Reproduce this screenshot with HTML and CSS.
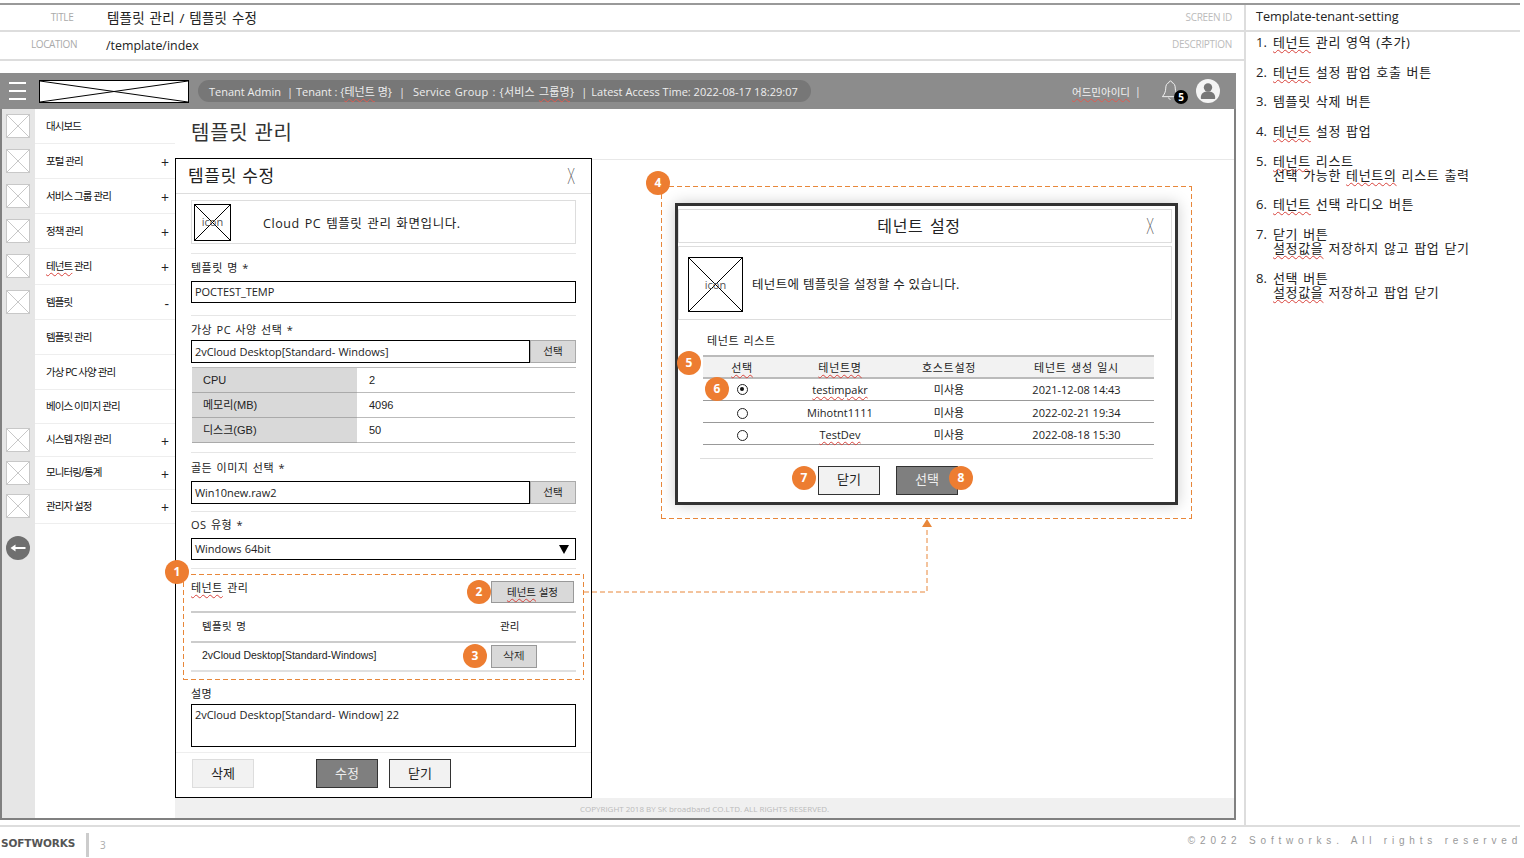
FILE: index.html
```html
<!DOCTYPE html>
<html lang="ko">
<head>
<meta charset="utf-8">
<title>Template-tenant-setting</title>
<link rel="stylesheet" href="styles.css">
</head>
<body>
<div class="page">
  <div class="top">
    <div class="left">
      <div class="meta">
        <div class="meta-row row-a">
          <span class="meta-key key-title">TITLE</span>
          <span class="meta-val">템플릿 관리 / 템플릿 수정</span>
          <span class="meta-side">SCREEN ID</span>
        </div>
        <div class="meta-row row-b">
          <span class="meta-key key-loc">LOCATION</span>
          <span class="meta-val val-loc">/template/index</span>
          <span class="meta-side">DESCRIPTION</span>
        </div>
      </div>
      <div class="app">
        <header class="bar">
          <div class="burger"><i></i><i></i><i></i></div>
          <svg class="logo xbox" viewBox="0 0 10 10" preserveAspectRatio="none"><path d="M0 0L10 10M10 0L0 10"/></svg>
          <div class="pill">
            <span>Tenant Admin</span><span class="p1">| Tenant : {<span class="sq sq-w">테넌트</span> 명}</span><span class="p2">|</span><span class="p3">Service Group : {서비스 <span class="sq sq-w">그룹명</span>}</span><span class="p2">|</span><span class="p4">Latest Access Time: 2022-08-17 18:29:07</span>
          </div>
          <div class="user"><span class="sq sq-w">어드민아이디</span><span class="user-sep">|</span></div>
          <svg class="bell" viewBox="0 0 20 24"><path d="M10 2.500c-.9 0-1.500.7-1.500 1.500C6 5 5 7.200 5 10c0 4-1.500 6.500-3.500 9h12c.8 0 5 0 5-1-2-2-3.500-4-3.500-8 0-2.800-1-5-3.500-6 0-.8-.6-1.500-1.500-1.500z"/><path d="M8 20c.3 1.200 1 2 2 2"/></svg>
          <svg class="avatar" viewBox="0 0 24 24"><circle cx="12" cy="12" r="12" fill="#f4f4f4"/><circle cx="12" cy="8.500" r="4.200" fill="#777"/><path d="M4.800 19c0-5 3-6.500 7.200-6.500s7.200 1.500 7.200 6.500c0 .6-.4 1-1 1H5.800c-.6 0-1-.4-1-1z" fill="#777"/></svg>
        </header>
        <div class="body">
          <nav class="side">
            <div class="item"><div class="ico"><svg class="xbox lite" viewBox="0 0 10 10" preserveAspectRatio="none"><path d="M0 0L10 10M10 0L0 10"/></svg></div><div class="lbl"><span>대시보드</span></div></div>
            <div class="item"><div class="ico"><svg class="xbox lite" viewBox="0 0 10 10" preserveAspectRatio="none"><path d="M0 0L10 10M10 0L0 10"/></svg></div><div class="lbl"><span>포털 관리</span><b>+</b></div></div>
            <div class="item"><div class="ico"><svg class="xbox lite" viewBox="0 0 10 10" preserveAspectRatio="none"><path d="M0 0L10 10M10 0L0 10"/></svg></div><div class="lbl"><span>서비스 그룹 관리</span><b>+</b></div></div>
            <div class="item"><div class="ico"><svg class="xbox lite" viewBox="0 0 10 10" preserveAspectRatio="none"><path d="M0 0L10 10M10 0L0 10"/></svg></div><div class="lbl"><span>정책 관리</span><b>+</b></div></div>
            <div class="item tall"><div class="ico"><svg class="xbox lite" viewBox="0 0 10 10" preserveAspectRatio="none"><path d="M0 0L10 10M10 0L0 10"/></svg></div><div class="lbl"><span><span class="sq">테넌트</span> 관리</span><b>+</b></div></div>
            <div class="item"><div class="ico"><svg class="xbox lite" viewBox="0 0 10 10" preserveAspectRatio="none"><path d="M0 0L10 10M10 0L0 10"/></svg></div><div class="lbl"><span>템플릿</span><b>-</b></div></div>
            <div class="item"><div class="ico"></div><div class="lbl"><span>템플릿 관리</span></div></div>
            <div class="item"><div class="ico"></div><div class="lbl"><span>가상 PC 사양 관리</span></div></div>
            <div class="item mid"><div class="ico"></div><div class="lbl"><span>베이스 이미지 관리</span></div></div>
            <div class="item low"><div class="ico"><svg class="xbox lite" viewBox="0 0 10 10" preserveAspectRatio="none"><path d="M0 0L10 10M10 0L0 10"/></svg></div><div class="lbl"><span>시스템 자원 관리</span><b>+</b></div></div>
            <div class="item low"><div class="ico"><svg class="xbox lite" viewBox="0 0 10 10" preserveAspectRatio="none"><path d="M0 0L10 10M10 0L0 10"/></svg></div><div class="lbl"><span>모니터링/통계</span><b>+</b></div></div>
            <div class="item mid"><div class="ico"><svg class="xbox lite" viewBox="0 0 10 10" preserveAspectRatio="none"><path d="M0 0L10 10M10 0L0 10"/></svg></div><div class="lbl"><span>관리자 설정</span><b>+</b></div></div>
            <svg class="back" viewBox="0 0 24 24"><circle cx="12" cy="12" r="12" fill="#6f6f6f"/><path d="M4.500 12l5-3.500V11h10v2h-10v2.500z" fill="#fff"/></svg>
          </nav>
          <main class="main">
            <h1 class="page-title">템플릿 관리</h1>
            <div class="fill"></div>
            <div class="copy">COPYRIGHT 2018 BY SK broadband CO.LTD. ALL RIGHTS RESERVED.</div>
          </main>
        </div>
      </div>
    </div>
    <aside class="notes">
      <div class="notes-id">Template-tenant-setting</div>
      <ol class="note-list">
        <li><span class="sq">테넌트</span> 관리 영역 (추가)</li>
        <li><span class="sq">테넌트</span> 설정 팝업 호출 버튼</li>
        <li>템플릿 삭제 버튼</li>
        <li><span class="sq">테넌트</span> 설정 팝업</li>
        <li><span class="sq">테넌트</span> 리스트<br>선택 가능한 <span class="sq">테넌트의</span> 리스트 출력</li>
        <li><span class="sq">테넌트</span> 선택 라디오 버튼</li>
        <li>닫기 버튼<br><span class="sq">설정값을</span> 저장하지 않고 팝업 닫기</li>
        <li>선택 버튼<br><span class="sq">설정값을</span> 저장하고 팝업 닫기</li>
      </ol>
    </aside>
  </div>
  <footer class="foot">
    <span class="brand">SOFTWORKS</span>
    <span class="foot-bar"></span>
    <span class="pageno">3</span>
    <span class="rights">©2022 Softworks. All rights reserved</span>
  </footer>

  <section class="modal">
    <div class="m-head"><span class="m-title">템플릿 수정</span><span class="closex">X</span></div>
    <div class="m-body">
      <div class="m-info">
        <div class="icon-box m-ic"><svg class="xbox dark" viewBox="0 0 10 10" preserveAspectRatio="none"><path d="M0 0L10 10M10 0L0 10"/></svg><span>icon</span></div>
        <p>Cloud PC 템플릿 관리 화면입니다.</p>
      </div>
      <div class="rule r1"></div>
      <div class="sec s-a">
        <label class="f-l l27">템플릿 명 *</label>
        <div class="inp h22">POCTEST_TEMP</div>
      </div>
      <div class="sec s-b">
        <label class="f-l l24">가상 PC 사양 선택 *</label>
        <div class="pick"><div class="inp">2vCloud Desktop[Standard- Windows]</div><button class="pick-btn">선택</button></div>
        <div class="spec">
          <div class="sp-k">CPU</div><div class="sp-v">2</div>
          <div class="sp-k">메모리(MB)</div><div class="sp-v">4096</div>
          <div class="sp-k">디스크(GB)</div><div class="sp-v">50</div>
        </div>
      </div>
      <div class="sec s-c">
        <label class="f-l l28">골든 이미지 선택 *</label>
        <div class="pick"><div class="inp">Win10new.raw2</div><button class="pick-btn">선택</button></div>
      </div>
      <div class="sec s-d">
        <label class="f-l l26">OS 유형 *</label>
        <div class="inp h22 sel"><span>Windows 64bit</span><svg class="caret" viewBox="0 0 10 9"><path d="M0 0h10L5 9z"/></svg></div>
      </div>
      <div class="tm dashed">
        <div class="tm-top"><span class="tm-title"><span class="sq">테넌트</span> 관리</span><button class="gbtn b-set"><span class="sq">테넌트</span> 설정</button></div>
        <div class="tm-row tm-h"><span>템플릿 명</span><span class="tm-c2">관리</span></div>
        <div class="tm-row tm-d"><span>2vCloud Desktop[Standard-Windows]</span><button class="gbtn b-del">삭제</button></div>
      </div>
      <label class="f-l desc-l">설명</label>
      <div class="inp area">2vCloud Desktop[Standard- Window] 22</div>
    </div>
    <div class="m-foot">
      <button class="fbtn lite-b">삭제</button>
      <button class="fbtn dark-b m-save">수정</button>
      <button class="fbtn line-b">닫기</button>
    </div>
  </section>

  <section class="pop-area dashed">
    <div class="pop">
      <div class="p-head"><span>테넌트 설정</span><span class="closex cx2">X</span></div>
      <div class="p-info">
        <div class="icon-box p-ic"><svg class="xbox dark" viewBox="0 0 10 10" preserveAspectRatio="none"><path d="M0 0L10 10M10 0L0 10"/></svg><span>icon</span></div>
        <p>테넌트에 템플릿을 설정할 수 있습니다.</p>
      </div>
      <div class="p-label">테넌트 리스트</div>
      <table class="p-table">
        <colgroup><col class="c1"><col class="c2"><col class="c3"><col class="c4"></colgroup>
        <thead><tr><th><span class="sq">선택</span></th><th><span class="sq">테넌트명</span></th><th>호스트설정</th><th>테넌트 생성 일시</th></tr></thead>
        <tbody>
          <tr><td><i class="radio on"></i></td><td><span class="sq">testimpakr</span></td><td>미사용</td><td>2021-12-08 14:43</td></tr>
          <tr><td><i class="radio"></i></td><td>Mihotnt1111</td><td>미사용</td><td>2022-02-21 19:34</td></tr>
          <tr><td><i class="radio"></i></td><td><span class="sq">TestDev</span></td><td>미사용</td><td>2022-08-18 15:30</td></tr>
        </tbody>
      </table>
      <div class="p-rule"></div>
      <div class="p-foot">
        <button class="fbtn line-b">닫기</button>
        <button class="fbtn dark-b">선택</button>
      </div>
    </div>
  </section>

  <svg class="link" viewBox="0 0 350 80"><path class="link-l" d="M0 73H343V7"/><path class="link-t" d="M343 0l5 8h-10z"/></svg>

  <span class="bell-n">5</span>
  <span class="num n1">1</span><span class="num n2">2</span><span class="num n3">3</span><span class="num n4">4</span>
  <span class="num n5">5</span><span class="num n6">6</span><span class="num n7">7</span><span class="num n8">8</span>
</div>
</body>
</html>
```
FILE: styles.css
```css
* { box-sizing: border-box; }
html, body { margin: 0; padding: 0; background: #fff; }
body { font-family: "Open Sans", "Noto Sans CJK KR", sans-serif; color: #222; font-size: 12px; }
button { font: inherit; margin: 0; padding: 0; cursor: default; }
p, h1, ol, label { margin: 0; padding: 0; }
.page { position: relative; width: 1524px; height: 858px; overflow: hidden; padding-top: 3px; }
.sq { text-decoration: underline wavy #d8433c 1px; text-underline-offset: 2px; }
.sq-w { text-decoration-color: #e05a50; }
.dashed {
  background:
    repeating-linear-gradient(90deg, #e8873a 0 5px, transparent 5px 8px) left top / 100% 1px no-repeat,
    repeating-linear-gradient(90deg, #e8873a 0 5px, transparent 5px 8px) left bottom / 100% 1px no-repeat,
    repeating-linear-gradient(180deg, #e8873a 0 5px, transparent 5px 8px) left top / 1px 100% no-repeat,
    repeating-linear-gradient(180deg, #e8873a 0 5px, transparent 5px 8px) right top / 1px 100% no-repeat;
}

.top { display: grid; grid-template-columns: 1244px 276px; width: 1520px; height: 824px; border-top: 2px solid #999; border-bottom: 2px solid #ddd; }
.left { display: flex; flex-direction: column; }

.meta { height: 56px; }
.meta-row { display: flex; align-items: center; border-bottom: 2px solid #ddd; }
.row-a { height: 27px; }
.row-b { height: 29px; }
.meta-key { color: #aaa; font-size: 10px; letter-spacing: -.4px; text-align: center; width: 107px; }
.key-title { width: 124px; margin-top: -2px; }
.key-loc { width: 108px; margin-top: -3px; }
.meta-val { font-size: 13.500px; color: #222; flex: 1; word-spacing: 1px; letter-spacing: .2px; }
.row-a .meta-val { margin-left: -17px; margin-top: -1px; }
.val-loc { letter-spacing: 0; word-spacing: 0; margin-left: -2px; font-size: 12.400px; }
.meta-side { color: #bbb; font-size: 10px; letter-spacing: -.3px; text-align: right; width: 150px; padding-right: 12px; margin-top: -2px; }
.row-b .meta-side { margin-top: -4px; }

.app { margin-top: 12px; width: 1236px; height: 747px; border: 2px solid #808080; border-top: 0; display: flex; flex-direction: column; }
.bar { height: 36px; flex: none; background: #8c8c8c; display: flex; align-items: center; margin: 0 -2px; padding-left: 9px; }
.burger { width: 17px; height: 18px; display: flex; flex-direction: column; justify-content: space-between; }
.burger i { display: block; height: 2px; background: #fff; }
.xbox { display: block; fill: none; background: #fff; }
.xbox path { stroke: #000; stroke-width: 1px; vector-effect: non-scaling-stroke; }
.logo { width: 150px; height: 23px; margin-left: 13px; border: 1px solid #000; }
.pill { width: 613px; height: 22px; margin-left: 9px; background: #777; border-radius: 11px; color: #eee; display: flex; align-items: center; padding-left: 11px; font-size: 11px; white-space: nowrap; }
.p1 { margin-left: 6px; }
.p2 { margin-left: 7px; }
.p3 { margin-left: 8px; letter-spacing: .2px; word-spacing: 1px; }
.p4 { margin-left: 4px; letter-spacing: .02px; }
.user { margin-left: 261px; width: 72px; color: #f2f2f2; font-size: 10.500px; display: flex; white-space: nowrap; }
.user-sep { margin-left: 5px; }
.bell { width: 19px; height: 24px; margin-left: 17px; fill: none; stroke: #f4f4f4; stroke-width: 1; margin-top: -3px; }
.avatar { width: 24px; height: 24px; margin-left: 16px; }
.bell-n { position: absolute; left: 1174px; top: 90px; width: 14px; height: 14px; border-radius: 50%; background: #000; color: #fff; font-size: 10px; font-weight: 700; line-height: 14px; text-align: center; }

.body { flex: 1; display: flex; min-height: 0; }
.side { width: 173px; flex: none; background: linear-gradient(90deg, #e6e6e6 33px, #fff 33px); }
.item { display: flex; height: 35px; }
.item.tall { height: 36px; }
.item.mid { height: 34px; }
.item.low { height: 33px; }
.ico { width: 33px; flex: none; display: flex; align-items: center; padding-left: 4px; padding-bottom: 2px; }
.xbox.lite { width: 24px; height: 24px; border: 1px solid #c8c8c8; }
.xbox.lite path { stroke: #c8c8c8; }
.lbl { flex: 1; display: flex; align-items: center; justify-content: space-between; padding: 0 7px 0 11px; border-bottom: 1px solid #eee; font-size: 10.500px; letter-spacing: -.9px; color: #111; white-space: nowrap; }
.lbl > span { margin-top: -2px; }
.mid .lbl > span { margin-top: -3px; }
.low .lbl > span { margin-top: -4px; }
.lbl b { font-weight: 400; font-size: 14px; color: #222; margin-top: 2px; }
.back { display: block; width: 24px; height: 24px; margin: 12px 0 0 4px; }

.main { flex: 1; display: flex; flex-direction: column; }
.page-title { height: 51px; border-bottom: 1px solid #e8e8e8; font-size: 20px; font-weight: 400; line-height: 47px; padding-left: 16px; letter-spacing: .75px; color: #333; }
.fill { flex: 1; }
.copy { height: 20px; background: #f0f0f0; color: #bbb; font-size: 8px; line-height: 22px; padding-left: 405px; letter-spacing: -.02px; }

.notes { border-left: 2px solid #ddd; }
.notes-id { height: 27px; border-bottom: 2px solid #ddd; padding-left: 10px; font-size: 12.700px; line-height: 23px; }
.note-list { list-style: none; counter-reset: n; padding: 3px 0 0 10px; display: flex; flex-direction: column; gap: 15.700px; margin: 0; }
.note-list li { counter-increment: n; position: relative; padding-left: 17px; font-size: 13px; line-height: 14px; letter-spacing: .65px; word-spacing: 1px; white-space: nowrap; }
.note-list li::before { content: counter(n) "."; position: absolute; left: 0; top: 0; letter-spacing: 0; }

.foot { display: flex; height: 30px; align-items: center; position: relative; padding-left: 1px; }
.brand { font-family: "DejaVu Sans", sans-serif; font-weight: 700; font-size: 10.500px; color: #555; width: 85px; letter-spacing: -.1px; margin-top: 2px; }
.foot-bar { width: 3px; height: 24px; background: #ccc; margin-top: 6px; }
.pageno { color: #aaa; font-size: 10px; margin: 6px 0 0 11px; }
.rights { margin-left: auto; margin-right: 2px; font-size: 10px; letter-spacing: 4.800px; color: #999; margin-top: -3px; white-space: nowrap; font-family: "Liberation Sans", sans-serif; }

.modal { position: absolute; left: 175px; top: 158px; width: 417px; height: 640px; background: #fff; border: 1px solid #000; }
.m-head { height: 35px; border-bottom: 1px solid #ddd; display: flex; justify-content: space-between; align-items: center; padding: 0 12px; font-size: 17px; letter-spacing: .7px; color: #222; }
.m-title { margin-top: -4px; }
.closex { font-family: "Inter", sans-serif; font-weight: 200; font-size: 22px; display: inline-block; transform: scaleX(.55); color: #555; }
.m-body { padding: 0 15px; }
.m-info { margin-top: 6px; height: 44px; border: 1px solid #ddd; display: flex; align-items: center; padding-left: 2px; }
.icon-box { position: relative; flex: none; }
.icon-box svg { width: 100%; height: 100%; border: 1px solid #000; }
.icon-box span { position: absolute; left: 0; right: 0; top: 50%; transform: translateY(-50%); text-align: center; color: #555; font-size: 11px; }
.m-ic { width: 37px; height: 37px; }
.m-ic span { margin-top: -1px; }
.m-info p { margin-left: 32px; font-size: 12.500px; letter-spacing: .6px; word-spacing: 1px; }
.rule { border-top: 1px solid #e6e6e6; }
.r1 { margin-top: 9px; }
.sec { border-bottom: 1px solid #e6e6e6; }
.s-a { padding-bottom: 12px; }
.s-b { padding-bottom: 10px; }
.s-c { padding-bottom: 7px; }
.s-d { padding-bottom: 8px; }
.f-l { display: flex; align-items: center; font-size: 11px; letter-spacing: .5px; word-spacing: 1px; }
.l24 { height: 24px; padding-top: 1px; }
.l26 { height: 26px; padding-bottom: 2px; }
.l27 { height: 27px; padding-bottom: 2px; }
.l28 { height: 28px; }
.inp { flex: 1; height: 23px; border: 1px solid #000; padding-left: 3px; font-size: 11px; line-height: 21px; white-space: nowrap; letter-spacing: -.05px; word-spacing: .5px; }
.h22 { height: 22px; line-height: 20px; }
.pick { display: flex; }
.pick-btn { width: 46px; height: 23px; border: 1px solid #aaa; background: #d9d9d9; font-size: 10.500px; color: #222; padding-bottom: 2px; }
.spec { margin-top: 4px; display: grid; grid-template-columns: 165px 218px; margin-left: 1px; grid-auto-rows: 25px; height: 75px; font-family: "Liberation Sans", "Noto Sans CJK KR", sans-serif; font-size: 11px; border-top: 1px solid #bbb; }
.sp-k { background: #d9d9d9; border-bottom: 1px solid #aaa; line-height: 25px; padding-left: 11px; }
.sp-v { border-bottom: 1px solid #bbb; line-height: 25px; padding-left: 12px; }
.sel { display: flex; justify-content: space-between; align-items: center; padding-right: 6px; }
.caret { width: 10px; height: 9px; fill: #000; }
.tm { position: relative; margin: 5px -8px 0; height: 106px; padding: 1px 8px; display: flex; flex-direction: column; }
.tm-top { height: 38px; display: flex; justify-content: space-between; align-items: flex-start; border-bottom: 2px solid #ccc; }
.tm-title { font-size: 11px; letter-spacing: .5px; word-spacing: 1px; margin-top: 4px; }
.gbtn { background: #d9d9d9; border: 1px solid #999; font-size: 10.500px; color: #222; padding-bottom: 2px; }
.b-set { width: 83px; height: 22px; margin-top: 6px; margin-right: 2px; }
.b-del { width: 46px; height: 23px; margin-left: 96px; }
.tm-row { display: flex; align-items: center; padding-left: 11px; }
.tm-h { height: 30px; padding-bottom: 4px; border-bottom: 2px solid #ccc; font-size: 10.500px; }
.tm-h span:first-child { width: 298px; word-spacing: 1px; letter-spacing: .4px; }
.tm-d { height: 29px; border-bottom: 2px solid #e0e0e0; font-family: "Liberation Sans", sans-serif; font-size: 10.500px; }
.tm-d span { width: 193px; white-space: nowrap; margin-top: -3px; }
.desc-l { height: 24px; padding-top: 1px; }
.area { height: 43px; flex: none; line-height: 20px; }
.m-foot { margin-top: 5px; border-top: 1px solid #eee; display: flex; padding: 6px 0 0 16px; }
.fbtn { width: 62px; height: 29px; font-size: 13px; background: #f2f2f2; color: #222; padding-bottom: 3px; }
.lite-b { border: 1px solid #ddd; }
.dark-b { background: #7f7f7f; color: #eee; border: 1px solid #333; }
.line-b { border: 1px solid #333; }
.m-save { margin: 0 11px 0 62px; }

.pop-area { position: absolute; left: 661px; top: 186px; width: 531px; height: 333px; padding: 17px 0 0 14px; }
.pop { width: 503px; height: 302px; border: 3px solid #333; background: #fff; box-shadow: 0 0 14px rgba(0,0,0,.2); padding: 3px 0 0; }
.p-head { position: relative; width: 494px; height: 34px; border: 1px solid #ddd; text-align: center; font-size: 16px; line-height: 32px; letter-spacing: .6px; word-spacing: 2px; color: #222; padding-right: 12px; }
.cx2 { position: absolute; right: 13px; top: 0; line-height: 32px; }
.p-info { width: 494px; height: 74px; margin-top: 3px; border: 1px solid #ddd; display: flex; align-items: center; padding-left: 9px; }
.p-ic { width: 55px; height: 55px; margin-top: 2px; }
.p-info p { margin-left: 9px; font-size: 12.500px; letter-spacing: .35px; }
.p-label { margin: 13px 0 0 29px; height: 15px; font-size: 11px; line-height: 15px; letter-spacing: .6px; word-spacing: 1px; }
.p-table { margin: 7px 0 0 25px; width: 451px; border-collapse: collapse; table-layout: fixed; font-size: 11px; text-align: center; }
.c1 { width: 78px; }
.c2 { width: 118px; }
.c3 { width: 100px; }
.c4 { width: 155px; }
.p-table th { height: 22px; background: #f2f2f2; border-top: 2px solid #bbb; border-bottom: 2px solid #bbb; font-weight: 400; padding: 0; font-size: 11px; letter-spacing: .7px; word-spacing: 1px; }
.p-table td { height: 22px; padding: 0; border-bottom: 1px solid #999; }
.p-table tbody tr + tr td { padding-top: 2px; }
.radio { display: block; width: 11px; height: 11px; border: 1px solid #222; border-radius: 50%; margin: 0 auto; position: relative; }
.p-table tbody tr + tr .radio { top: 1px; }
.radio.on::after { content: ""; position: absolute; left: 2.500px; top: 2.500px; width: 4px; height: 4px; background: #111; border-radius: 50%; }
.p-rule { margin: 13px 0 0 22px; width: 453px; border-top: 1px solid #ddd; }
.p-foot { display: flex; gap: 16px; padding: 7px 0 0 140px; }

.link { position: absolute; left: 584px; top: 519px; width: 350px; height: 80px; }
.link-l { fill: none; stroke: #e8873a; stroke-width: 1; stroke-dasharray: 5 3; }
.link-t { fill: #e8873a; }

.num { position: absolute; width: 24px; height: 24px; border-radius: 50%; background: #ed7d31; color: #fff; font-weight: 700; font-size: 12px; line-height: 24px; text-align: center; }
.n1 { left: 165px; top: 560px; }
.n2 { left: 467px; top: 580px; }
.n3 { left: 463px; top: 644px; }
.n4 { left: 646px; top: 171px; }
.n5 { left: 677px; top: 351px; }
.n6 { left: 705px; top: 377px; }
.n7 { left: 792px; top: 466px; }
.n8 { left: 949px; top: 466px; }
```
